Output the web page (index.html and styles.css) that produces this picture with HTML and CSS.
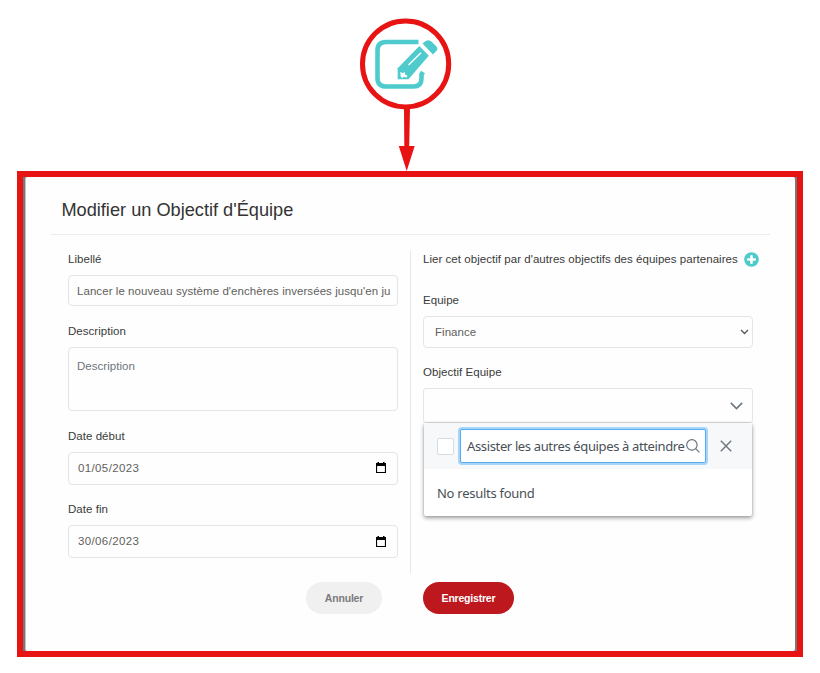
FILE: index.html
```html
<!DOCTYPE html>
<html lang="fr">
<head>
<meta charset="utf-8">
<title>Modifier un Objectif d'Équipe</title>
<link rel="stylesheet" href="styles.css">
</head>
<body>
<div class="callout">
  <svg width="100" height="158" viewBox="0 0 100 158">
    <ellipse cx="50.6" cy="50.9" rx="43.1" ry="43" fill="#fff" stroke="#e81313" stroke-width="5"/>
    <path d="M49 95h6l-.8 38h5.500l-8 25-7.900-25h5.500z" fill="#e81313"/>
    <path d="M63.500 29H31q-8.500 0-8.500 8.500V65q0 8.500 8.500 8.500h27.500q8 0 8-8v-4l1.500-2.500" fill="none" stroke="#50cbcd" stroke-width="4.600"/>
    <path d="M42.700 55.300 64.300 33l9.500 9.700L53.500 66.200H42.700z" fill="#50cbcd"/>
    <path d="m67.500 30.500 3.200-2.400q3-2.200 6 .6l4.300 4.200q2.600 2.800.4 5l-3.500 3.500z" fill="#50cbcd"/>
    <path d="M53.500 52 66 39.800" stroke="#fff" stroke-width="1.400"/>
    <path d="m45.300 59 2.200 1.100 2.300-.8.500 2.600 2.300.6-1.200 1.900-2.700-.6-1.300 1.500-1.700-1.900z" fill="#fff"/>
  </svg>
</div>
<main class="frame">
  <section class="dialog">
    <header class="head"><h1>Modifier un Objectif d'Équipe</h1></header>
    <div class="columns">
      <form class="col left">
        <div class="label"><span>Libellé</span></div>
        <div class="field title-field"><span>Lancer le nouveau système d'enchères inversées jusqu'en ju</span></div>
        <div class="label"><span>Description</span></div>
        <div class="field area"><span>Description</span></div>
        <div class="label"><span>Date début</span></div>
        <div class="field date first"><span>01/05/2023</span>
          <svg width="10" height="11" viewBox="0 0 10 11"><path d="M1.500 0H3v1h4V0h1.500v1H10v10H0V1h1.500zM1.100 4v5.900h7.800V4z" fill="#000" fill-rule="evenodd"/></svg></div>
        <div class="label"><span>Date fin</span></div>
        <div class="field date last"><span>30/06/2023</span>
          <svg width="10" height="11" viewBox="0 0 10 11"><path d="M1.500 0H3v1h4V0h1.500v1H10v10H0V1h1.500zM1.100 4v5.900h7.800V4z" fill="#000" fill-rule="evenodd"/></svg></div>
      </form>
      <div class="col right">
        <div class="label link-row"><span>Lier cet objectif par d'autres objectifs des équipes partenaires</span>
          <svg width="15" height="15" viewBox="0 0 15 15"><circle cx="7.500" cy="7.500" r="7.300" fill="#4fcaca"/><path d="M7.500 4.200v6.600M4.200 7.500h6.600" stroke="#fff" stroke-width="2.600" stroke-linecap="round"/></svg></div>
        <div class="label team"><span>Equipe</span></div>
        <div class="field select"><span>Finance</span>
          <svg width="9" height="6" viewBox="0 0 9 6"><path d="m1 1 3.500 3.500L8 1" fill="none" stroke="#555" stroke-width="1.300"/></svg></div>
        <div class="label"><span>Objectif Equipe</span></div>
        <div class="multi">
          <svg width="13" height="8" viewBox="0 0 13 8"><path d="m.8.900 5.700 5.700L12.200.900" fill="none" stroke="#6c757d" stroke-width="1.500"/></svg>
          <div class="panel">
            <div class="panel-head">
              <span class="check"></span>
              <div class="search"><span>Assister les autres équipes à atteindre</span>
                <svg width="14" height="14" viewBox="0 0 14 14"><circle cx="5.900" cy="5.900" r="5.200" fill="none" stroke="#6c757d" stroke-width="1.200"/><path d="m9.700 9.700 3.700 3.700" stroke="#6c757d" stroke-width="1.200"/></svg></div>
              <svg class="close" width="12" height="12" viewBox="0 0 12 12"><path d="m.8.800 10.400 10.400M11.200.800.800 11.200" stroke="#6c757d" stroke-width="1.400"/></svg>
            </div>
            <div class="empty"><span>No results found</span></div>
          </div>
        </div>
      </div>
    </div>
    <footer class="actions"><button class="btn cancel">Annuler</button><button class="btn save">Enregistrer</button></footer>
  </section>
</main>
</body>
</html>
```
FILE: styles.css
```css
* { box-sizing: border-box; }
body { margin: 0; background: #fff; font: 11.500px/16px "Liberation Sans", Arial, sans-serif; letter-spacing: .04px; color: #3a3a3a; }
svg { display: block; flex: none; }
.callout { height: 171px; padding: 13px 0 0 355px; }
.frame { width: 786px; height: 486px; margin-left: 17px; border: 6px solid #e81313; background: #777; padding: 0 2px; }
.dialog { height: 474px; background: #fefefe; border-left: 1px solid #c4c4c4; border-radius: 2px; padding-left: 25px; }
.head { width: 719px; height: 58px; border-bottom: 1px solid #e9ebed; padding: 22px 0 0 10.400px; }
h1 { margin: 0; font-size: 18.200px; line-height: 22px; font-weight: 400; white-space: nowrap; letter-spacing: 0; color: #333; }
.columns { display: flex; margin: 16px 0 0 17px; height: 322px; }
.col.left { width: 343px; padding-right: 12px; border-right: 1px solid #e5e7e9; }
.col.right { width: 342px; padding-left: 12px; }
.label { height: 16px; margin-bottom: 8px; white-space: nowrap; display: flex; align-items: center; }
.field { border: 1px solid #e3e4e5; border-radius: 4px; padding: 0 8px; display: flex; align-items: center; color: #625f5c; margin-bottom: 17px; white-space: nowrap; }
.title-field { height: 31px; letter-spacing: .06px; }
.area { height: 64px; align-items: flex-start; padding-top: 10px; color: #6c757d; }
.date { height: 33px; justify-content: space-between; padding: 0 11px 0 9px; letter-spacing: .37px; }
.date.first { margin-bottom: 16px; padding-bottom: 2px; }
.date.last { padding-bottom: 1px; }
.link-row { gap: 6px; margin-bottom: 25px; }
.select { height: 32px; justify-content: space-between; padding: 0 3px 0 11px; margin-bottom: 16px; }
.multi { position: relative; height: 35px; border: 1px solid #e3e4e5; border-radius: 3px; display: flex; justify-content: flex-end; align-items: center; padding-right: 9px; }
.panel { position: absolute; top: 34px; left: 0; width: 328px; height: 93px; background: #fff; box-shadow: 0 2px 4px rgba(0,0,0,.38), 0 0 2px rgba(0,0,0,.18); border-radius: 2px; font: 13px/20px "Noto Sans", "Open Sans", sans-serif; letter-spacing: -.27px; color: #495057; }
.panel-head { height: 46px; background: #f7f8fa; display: flex; align-items: center; padding-left: 13px; }
.check { width: 17px; height: 17px; border: 1px solid #d5dbe0; border-radius: 2px; background: #fff; }
.search { width: 246px; height: 34px; margin-left: 6px; border: 1px solid #59abed; box-shadow: 0 0 0 2px #a6d5fa; border-radius: 2px; background: #fff; display: flex; align-items: center; justify-content: space-between; padding: 0 5px 0 6px; white-space: nowrap; letter-spacing: -.36px; }
.close { margin-left: 14px; }
.empty { height: 47px; display: flex; align-items: center; padding-left: 13px; }
.actions { display: flex; gap: 41px; padding: 9px 0 0 255px; }
.btn { border: 0; height: 32px; border-radius: 16px; font: bold 10.500px/16px "Liberation Sans", Arial, sans-serif; letter-spacing: -.2px; padding: 0; }
.cancel { width: 76px; background: #f0f0f0; color: #7b7b7b; }
.save { width: 91px; background: #be181f; color: #fff; }
```
